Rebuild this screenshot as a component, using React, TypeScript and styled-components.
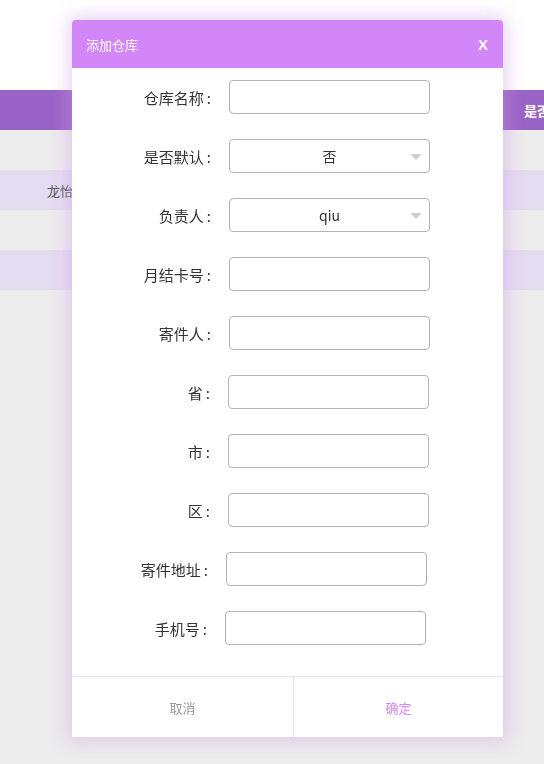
import { Component } from "react";
import styled, { createGlobalStyle } from "styled-components";

const GlobalStyle = createGlobalStyle`
  html, body {
    margin: 0;
    padding: 0;
    background: #ececec;
    font-family: "Noto Sans CJK SC", "Noto Sans", sans-serif;
  }
`;

const Page = styled.div`
  min-height: 764px;
  background: #ececec;
`;

const TopBand = styled.div`
  height: 90px;
  background: #ffffff;
`;

const TableHead = styled.div`
  display: flex;
  align-items: center;
  justify-content: flex-end;
  height: 40px;
  background: #9a63c6;
  color: #ffffff;
  font-size: 13px;
  font-weight: bold;
  overflow: hidden;
  white-space: nowrap;

  span {
    width: 20px;
    overflow: hidden;
  }
`;

const TableRow = styled.div<{ $alt?: boolean }>`
  display: flex;
  align-items: center;
  height: 40px;
  padding-left: 47px;
  background: ${(p) => (p.$alt ? "#e4dcf1" : "#ececec")};
  color: #555;
  font-size: 13px;
`;

const Overlay = styled.div`
  position: fixed;
  inset: 0;
  display: flex;
  justify-content: flex-start;
  align-items: flex-start;
  padding: 20px 0 0 72px;
  box-sizing: border-box;
`;

const Modal = styled.div`
  width: 431px;
  background: #ffffff;
  border-radius: 4px 4px 0 0;
  box-shadow: 0 0 18px 4px rgba(204, 160, 232, 0.45);
`;

const ModalHeader = styled.div`
  display: flex;
  align-items: center;
  justify-content: space-between;
  height: 48px;
  padding: 0 14px;
  background: #d386f8;
  border-radius: 4px 4px 0 0;
  color: #ffffff;
  font-size: 13px;
`;

const Close = styled.span`
  font-family: "Liberation Sans", Arial, sans-serif;
  font-size: 15px;
  font-weight: bold;
  margin-right: 1px;
`;

const Form = styled.div`
  display: flex;
  flex-direction: column;
  gap: 25px;
  padding: 12px 0 31px;
`;

const Row = styled.div<{ $shift?: number }>`
  display: flex;
  align-items: center;
  height: 34px;
  margin-left: ${(p) => -(p.$shift ?? 0)}px;
`;

const Label = styled.label`
  width: 157px;
  padding-right: 18px;
  box-sizing: border-box;
  text-align: right;
  font-size: 15px;
  color: #333;
  white-space: nowrap;
`;

const Colon = styled.span`
  margin-left: 3px;
`;

const Input = styled.div`
  position: relative;
  display: flex;
  align-items: center;
  justify-content: center;
  width: 201px;
  height: 34px;
  box-sizing: border-box;
  border: 1px solid #b3b3b3;
  border-radius: 4px;
  font-size: 14px;
  color: #333;
`;

const Caret = styled.span`
  position: absolute;
  right: 7px;
  top: 14px;
  width: 0;
  height: 0;
  border-left: 6px solid transparent;
  border-right: 6px solid transparent;
  border-top: 6px solid #cfcfcf;
`;

const Footer = styled.div`
  display: flex;
  height: 60px;
  border-top: 1px solid #e6e6e6;
`;

const FootButton = styled.div<{ $primary?: boolean }>`
  display: flex;
  align-items: center;
  justify-content: center;
  flex: ${(p) => (p.$primary ? "0 0 209px" : "0 0 221px")};
  font-size: 13px;
  color: ${(p) => (p.$primary ? "#d386f8" : "#999999")};
  & + & {
    border-left: 1px solid #e6e6e6;
  }
`;

const fields: { label: string; value?: string; select?: boolean; shift?: number }[] = [
  { label: "仓库名称" },
  { label: "是否默认", value: "否", select: true },
  { label: "负责人", value: "qiu", select: true },
  { label: "月结卡号" },
  { label: "寄件人" },
  { label: "省", shift: 1 },
  { label: "市", shift: 1 },
  { label: "区", shift: 1 },
  { label: "寄件地址", shift: 3 },
  { label: "手机号", shift: 4 },
];

export default class App extends Component {
  render() {
    return (
      <>
        <GlobalStyle />
        <Page>
          <TopBand />
          <TableHead>
            <span>是否默认</span>
          </TableHead>
          <TableRow />
          <TableRow $alt>龙怡仓库</TableRow>
          <TableRow />
          <TableRow $alt />
        </Page>
        <Overlay>
          <Modal>
            <ModalHeader>
              <span>添加仓库</span>
              <Close>X</Close>
            </ModalHeader>
            <Form>
              {fields.map((f) => (
                <Row key={f.label} $shift={f.shift}>
                  <Label>
                    {f.label}
                    <Colon>:</Colon>
                  </Label>
                  <Input>
                    {f.value}
                    {f.select && <Caret />}
                  </Input>
                </Row>
              ))}
            </Form>
            <Footer>
              <FootButton>取消</FootButton>
              <FootButton $primary>确定</FootButton>
            </Footer>
          </Modal>
        </Overlay>
      </>
    );
  }
}
